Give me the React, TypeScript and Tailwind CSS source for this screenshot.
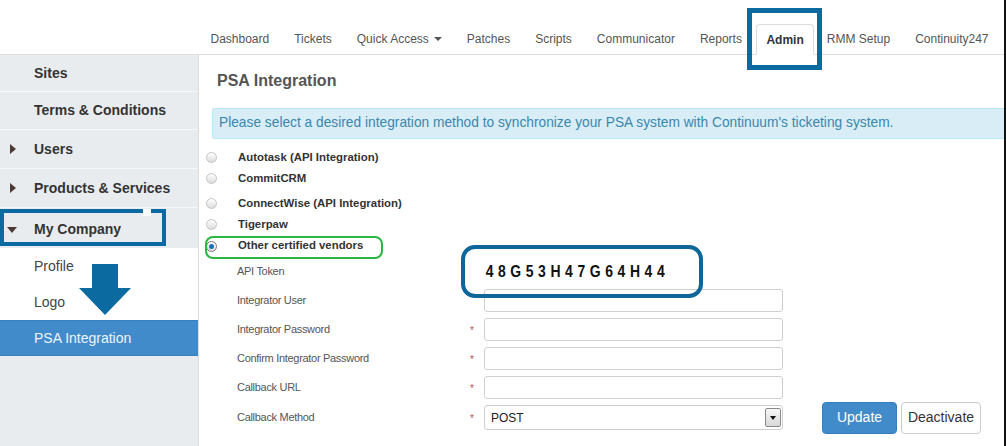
import React from "react";

const navItems = ["Dashboard", "Tickets", "Quick Access", "Patches", "Scripts", "Communicator", "Reports"];

function Radio({ checked }: { checked?: boolean }) {
  return (
    <span
      className={
        "flex h-[11px] w-[11px] items-center justify-center rounded-full border bg-gradient-to-b from-white to-[#dcdcdc] " +
        (checked ? "border-[#7a7a7a]" : "border-[#c4c4c4]")
      }
    >
      {checked && <span className="h-[5px] w-[5px] rounded-full bg-[#1d6fb8]" />}
    </span>
  );
}

function Caret({ right }: { right?: boolean }) {
  return right ? (
    <span className="h-0 w-0 border-y-[5px] border-l-[6px] border-y-transparent border-l-[#4b3a36]" />
  ) : (
    <span className="h-0 w-0 border-x-[5px] border-t-[6px] border-x-transparent border-t-[#4b3a36]" />
  );
}

const radios = [
  { label: "Autotask (API Integration)" },
  { label: "CommitCRM" },
  { label: "ConnectWise (API Integration)", gap: true },
  { label: "Tigerpaw" },
  { label: "Other certified vendors", checked: true },
];

const fields = ["Integrator User", "Integrator Password", "Confirm Integrator Password", "Callback URL"];

export default function App() {
  return (
    <div className="relative h-[446px] w-[1006px] overflow-hidden border-r-2 border-[#111] bg-white font-['Liberation_Sans',Arial,sans-serif]">
      {/* top nav */}
      <div className="flex h-[55px] items-end border-b border-[#ddd] pl-[198px] text-[12px] text-[#555]">
        {navItems.map((item) => (
          <div key={item} className="flex h-[30px] items-center gap-[5px] px-[12.5px]">
            {item}
            {item === "Quick Access" && (
              <span className="h-0 w-0 border-x-[4px] border-t-[4px] border-x-transparent border-t-[#555]" />
            )}
          </div>
        ))}
        <div className="-mb-px ml-[2px] flex h-[31px] items-center rounded-t-[4px] border border-[#ddd] border-b-white bg-white px-[9px] font-bold text-[#333]">
          Admin
        </div>
        <div className="flex h-[30px] items-center pl-[13px] pr-[12.5px]">RMM Setup</div>
        <div className="flex h-[30px] items-center px-[12.5px]">Continuity247</div>
      </div>

      <div className="flex h-[391px]">
        {/* sidebar */}
        <div className="w-[199px] shrink-0 border-r border-[#dcdcdc] bg-[#e9ecef] text-[14px] text-[#333]">
          <div className="flex h-[37px] items-center border-b border-[#f7f7f7] pl-[34px] font-bold">Sites</div>
          <div className="flex h-[38px] items-center border-b border-[#f7f7f7] pl-[34px] font-bold">Terms &amp; Conditions</div>
          <div className="flex h-[39px] items-center border-b border-[#f7f7f7] pl-[10px] font-bold">
            <Caret right />
            <span className="ml-[18px]">Users</span>
          </div>
          <div className="flex h-[39px] items-center border-b border-[#f7f7f7] pl-[10px] font-bold">
            <Caret right />
            <span className="ml-[18px]">Products &amp; Services</span>
          </div>
          <div className="flex h-[40px] items-center pl-[7px] pt-[3px] font-bold">
            <Caret />
            <span className="ml-[17px]">My Company</span>
          </div>
          <div className="flex h-[36px] items-center bg-white pl-[34px] text-[#444]">Profile</div>
          <div className="flex h-[36px] items-center bg-white pl-[34px] text-[#444]">Logo</div>
          <div className="flex h-[36px] items-center border-y border-[#3a7fbd] bg-[#428bca] pl-[34px] text-[#eef4fb]">
            PSA Integration
          </div>
        </div>

        {/* main */}
        <div className="flex-1">
          <h1 className="ml-[18px] mt-[16px] h-[20px] text-[16px] font-bold leading-[20px] text-[#555]">PSA Integration</h1>
          <div className="ml-[13px] mt-[17px] flex h-[31px] items-center rounded-l-[3px] border border-r-0 border-[#bce8f1] bg-[#d9edf7] pl-[6px] text-[13.75px] text-[#3a87ad]">
            Please select a desired integration method to synchronize your PSA system with Continuum&apos;s ticketing system.
          </div>

          <div className="mt-[8px] text-[11.4px] font-bold text-[#333]">
            {radios.map((r) => (
              <div
                key={r.label}
                className={"ml-[7px] flex items-center " + (r.checked ? "h-[22px]" : "h-[21px]") + (r.gap ? " mt-[4px]" : "")}
              >
                <Radio checked={r.checked} />
                <span className="ml-[21px]">{r.label}</span>
              </div>
            ))}
          </div>

          <div className="text-[11px] tracking-[-0.3px] text-[#555]">
            <div className="flex h-[29px] items-center">
              <span className="ml-[38px] w-[247px]">API Token</span>
              <span className="inline-block origin-left scale-x-[0.82] pl-[2px] text-[17px] font-bold tracking-[5.6px] text-[#111]">
                48G53H47G64H44
              </span>
            </div>
            {fields.map((f) => (
              <div key={f} className="flex h-[29px] items-center">
                <span className="ml-[38px] w-[233px]">{f}</span>
                <span className="w-[14px] pt-[2px] text-[10px] text-[#c0504d]">{f === "Integrator User" ? "" : "*"}</span>
                <div className="h-[23px] w-[299px] rounded-[3px] border border-[#cfcfcf] bg-white" />
              </div>
            ))}
            <div className="flex h-[31px] items-center">
              <span className="ml-[38px] w-[233px]">Callback Method</span>
              <span className="w-[14px] pt-[2px] text-[10px] text-[#c0504d]">*</span>
              <div className="flex h-[25px] w-[299px] items-center justify-between rounded-[3px] border border-[#cfcfcf] bg-white pl-[6px] pr-[1px] text-[12px] tracking-normal text-[#222]">
                POST
                <span className="flex h-[19px] w-[16px] items-center justify-center rounded-[2px] border border-[#8a8a8a] bg-gradient-to-b from-[#f7f7f7] to-[#d8d8d8]">
                  <span className="h-0 w-0 border-x-[3.5px] border-t-[4px] border-x-transparent border-t-[#111]" />
                </span>
              </div>
              <button className="ml-[39px] h-[32px] w-[75px] rounded-[4px] border border-[#357ebd] bg-[#428bca] text-[14px] tracking-normal text-white">
                Update
              </button>
              <button className="ml-[4px] h-[32px] w-[80px] rounded-[4px] border border-[#ccc] bg-white text-[14px] tracking-normal text-[#333]">
                Deactivate
              </button>
            </div>
          </div>
        </div>
      </div>

      {/* annotations */}
      <div className="absolute left-[747px] top-[8px] h-[62px] w-[75px] border-[5px] border-[#0b6aa0]" />
      <div className="absolute left-0 top-[209px] h-[37px] w-[166px] border-4 border-[#0b6aa0]" />
      <div className="absolute left-[143px] top-[209px] h-[7px] w-[8px] bg-white" />
      <svg className="absolute left-[79px] top-[264px]" width="52" height="52" viewBox="0 0 52 52">
        <polygon points="13,0 39,0 39,24 52,24 26,51 0,24 13,24" fill="#0b6aa0" />
      </svg>
      <div className="absolute left-[205px] top-[236px] h-[23px] w-[178px] rounded-[8px] border-2 border-[#2db543]" />
      <div className="absolute left-[461px] top-[245px] h-[53px] w-[242px] rounded-[14px] border-4 border-[#0e6699]" />
    </div>
  );
}
